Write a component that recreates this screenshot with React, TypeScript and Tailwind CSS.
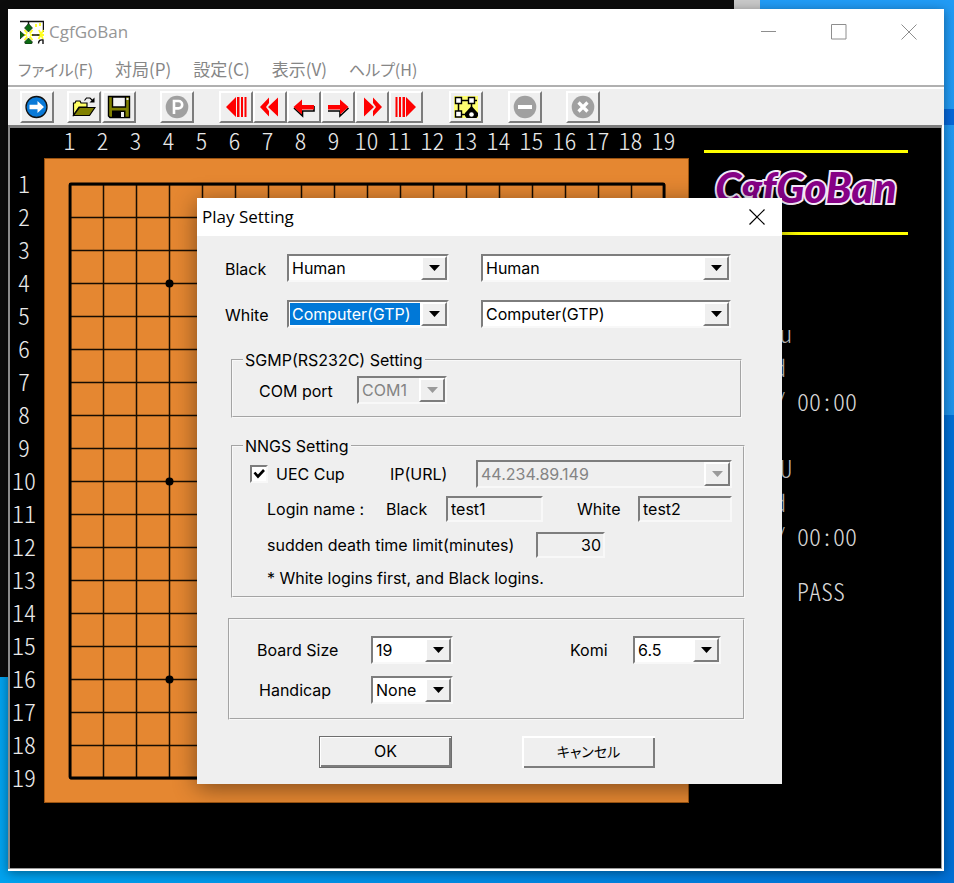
import React from "react";

const uiFont = "font-['Inter','Noto_Sans_CJK_JP',sans-serif]";
const boardFont = "font-['Noto_Sans_CJK_JP',sans-serif] font-light [font-feature-settings:'hwid']";

const lines = Array.from({ length: 19 }, (_, i) => i + 1);
const stars = [4, 10, 16];

function ToolButton({ label, children }: { label: string; children: React.ReactNode }) {
  return (
    <button
      type="button"
      aria-label={label}
      className="flex h-8 w-[34px] items-center justify-center border-2 border-t-white border-r-[#7c7c7c] border-b-[#7c7c7c] border-l-white bg-[#efefef]"
    >
      {children}
    </button>
  );
}

function Icon({ children }: { children: React.ReactNode }) {
  return (
    <svg width="24" height="24" viewBox="0 0 24 24" aria-hidden="true">
      {children}
    </svg>
  );
}

function Toolbar() {
  return (
    <div className="flex h-[38px] items-center border-t-2 border-white bg-[#efefef] pb-px pl-3">
      <ToolButton label="Start">
        <Icon>
          <circle cx="11.500" cy="12" r="10.500" fill="#0a7ad8" stroke="#111" strokeWidth="1.3" />
          <path d="M4.500 9.800h8V6l6.500 6-6.500 6v-3.800h-8z" fill="#fff" />
        </Icon>
      </ToolButton>
      <div className="ml-[13px] flex gap-px">
        <ToolButton label="Open">
          <Icon>
            <path d="M1.500 20V8h1.500l1-2h4l1 2h6v4H7z" fill="#ffff66" stroke="#000" strokeWidth="1.2" />
            <path d="M1.500 20.500 7.500 12.500H23l-5.500 8z" fill="#808000" stroke="#000" strokeWidth="1.2" />
            <path d="M12.500 5.500 14.500 3h3.500l3 3" fill="none" stroke="#000" strokeWidth="1.2" />
            <path d="M22.500 2.500V7.500H17.500z" fill="#000" />
          </Icon>
        </ToolButton>
        <ToolButton label="Save">
          <Icon>
            <path d="M1.500 1.500H22.500V22.500H3L1.500 21z" fill="#808000" stroke="#000" strokeWidth="1.4" />
            <path d="M5.500 2H18.500V12H5.500z" fill="#f4f4f4" stroke="#000" strokeWidth="1.4" />
            <path d="M5 15.500H18.500V22.500H5z" fill="#000" />
            <path d="M14 17h3v5h-3z" fill="#eee" />
            <path d="M19.500 3h2v2h-2z" fill="#eee" />
          </Icon>
        </ToolButton>
      </div>
      <div className="ml-6">
        <ToolButton label="Pass">
          <Icon>
            <circle cx="12" cy="12" r="11.300" fill="#a0a0a0" />
            <path d="M9 19V6h4.500a3.700 3.700 0 0 1 0 7.400H9" fill="none" stroke="#fff" strokeWidth="2.600" />
          </Icon>
        </ToolButton>
      </div>
      <div className="ml-[25px] flex">
        <ToolButton label="First move">
          <Icon>
            <path d="M2 12 12 2V22zM13 2h2.500v20H13zM17 2h2v20h-2zM20.500 2h2v20h-2z" fill="#f00" />
          </Icon>
        </ToolButton>
        <ToolButton label="Back ten moves">
          <Icon>
            <path d="M2 12 11 2.500V8L8 12l3 4v5.500zM10 12l10-9.500v19z" fill="#f00" />
          </Icon>
        </ToolButton>
        <ToolButton label="Back one move">
          <Icon>
            <path d="M2 13 10.500 21V16H22V11" fill="none" stroke="#000" strokeWidth="1.600" />
            <path d="M1.500 12 10 4.500V10H22v4.500H10V19.500z" fill="#f00" />
          </Icon>
        </ToolButton>
        <ToolButton label="Forward one move">
          <Icon>
            <path d="M22.500 13 14 21V16H2" fill="none" stroke="#000" strokeWidth="1.600" />
            <path d="M22.500 12 14 4.500V10H2v4.500h12V19.500z" fill="#f00" />
          </Icon>
        </ToolButton>
        <ToolButton label="Forward ten moves">
          <Icon>
            <path d="M22 12 13 2.500V8l3 4-3 4v5.500zM14 12 4 2.500v19z" fill="#f00" />
          </Icon>
        </ToolButton>
        <ToolButton label="Last move">
          <Icon>
            <path d="M22 12 12 2V22zM8.500 2H11v20H8.500zM5 2h2v20H5zM1.500 2h2v20h-2z" fill="#f00" />
          </Icon>
        </ToolButton>
      </div>
      <div className="ml-[26px]">
        <ToolButton label="Show territory">
          <Icon>
            <path d="M0 1H24V23H0z" fill="#ffff70" />
            <path d="M4.500 5.500H23M4.500 5.500v14H18M17.500 5.500v14" fill="none" stroke="#000" strokeWidth="1.500" />
            <path d="M17.500 11 24 18v3l-1.500 2h-10L11 21v-3z" fill="#000" />
            <path d="M1.500 2.500h6v6h-6zM14.500 2.500h6v6h-6zM1.500 16h6v6h-6z" fill="#fff" stroke="#000" strokeWidth="1.400" />
            <circle cx="17.500" cy="19.500" r="2.300" fill="#fff" />
          </Icon>
        </ToolButton>
      </div>
      <div className="ml-[25px]">
        <ToolButton label="Stop">
          <Icon>
            <circle cx="12" cy="12" r="11.300" fill="#a0a0a0" />
            <path d="M5 10h14v4H5z" fill="#fff" />
          </Icon>
        </ToolButton>
      </div>
      <div className="ml-6">
        <ToolButton label="Cancel search">
          <Icon>
            <circle cx="12" cy="12" r="11.300" fill="#a0a0a0" />
            <path d="m7.500 7.500 9 9m0-9-9 9" stroke="#fff" strokeWidth="3.200" />
          </Icon>
        </ToolButton>
      </div>
    </div>
  );
}

function TitleBar() {
  return (
    <header className="flex h-[45px] items-center justify-between pr-[27px] pl-3">
      <div className="flex items-center gap-[5px]">
        <svg width="24" height="24" viewBox="0 0 24 24" aria-hidden="true">
          <path d="M0 1.500H23.500V12M8.500 2v4" fill="none" stroke="#111" strokeWidth="1.500" />
          <path d="m4.500 10 8 10m0-10-8 10M3.500 15h10M19 10l4 9m.500-9-5 9M17 15h7M16 4v3m4-4v3" stroke="#ffff20" strokeWidth="1.800" />
          <path d="M8.500 3.500 12.500 8l-4 4-4-4zM0 11l4.500 4L0 19zM8.500 18l4 4-1 2h-6l-1-2z" fill="#0a6b12" stroke="#111" strokeWidth=".6" />
          <circle cx="8.500" cy="15" r="2" fill="#fff" />
          <path d="M12 15h7.500M18.500 23.500c0-3 2-4 4.500-3.500v4" fill="none" stroke="#111" strokeWidth="1.400" />
        </svg>
        <h1 className="font-['Open_Sans',sans-serif] text-[17px] leading-6 text-[#969696]">CgfGoBan</h1>
      </div>
      <div className="flex items-center gap-[54px] text-[#8e8e8e]">
        <button type="button" aria-label="Minimize">
          <svg width="16" height="16" viewBox="0 0 16 16"><path d="M0 7.500h15" stroke="currentColor" /></svg>
        </button>
        <button type="button" aria-label="Maximize">
          <svg width="16" height="16" viewBox="0 0 16 16"><path d="M.5.5h14.500v14.500H.5z" fill="none" stroke="currentColor" /></svg>
        </button>
        <button type="button" aria-label="Close">
          <svg width="16" height="16" viewBox="0 0 16 16"><path d="m.5.5 15 15m0-15-15 15" stroke="currentColor" /></svg>
        </button>
      </div>
    </header>
  );
}

function MenuBar() {
  return (
    <nav className="flex h-[31px] items-center gap-[22px] pb-0.5 pl-2.5 font-['Noto_Sans_CJK_JP',sans-serif] text-[17px] leading-6 text-[#868686] [font-feature-settings:'palt']">
      <button type="button" className="text-[16px]">ファイル(F)</button>
      <button type="button">対局(P)</button>
      <button type="button">設定(C)</button>
      <button type="button">表示(V)</button>
      <button type="button" className="text-[16px]">ヘルプ(H)</button>
    </nav>
  );
}

function Board() {
  return (
    <div className={`text-[24px] leading-[33px] text-[#e8e8e8] ${boardFont}`}>
      <div className="flex h-[30px] items-center pb-2 pl-[43px]">
        {lines.map((n) => (
          <span key={n} className="w-[33px] text-center">{n}</span>
        ))}
      </div>
      <div className="flex">
        <div className="flex w-[34px] flex-col pt-2">
          {lines.map((n) => (
            <span key={n} className={n < 10 ? "h-[33px] pl-2" : "h-[33px] pl-0.5"}>{n}</span>
          ))}
        </div>
        <svg width="645" height="645" viewBox="0 0 645 645" role="img" aria-label="Go board">
          <rect x=".5" y=".5" width="644" height="644" fill="#e58731" stroke="#9a5310" />
          {lines.map((n) => (
            <g key={n} stroke="#170c02" strokeWidth="1.500">
              <path d={`M${26.500 + 33 * (n - 1)} 26V620`} />
              <path d={`M26 ${26.500 + 33 * (n - 1)}H620`} />
            </g>
          ))}
          <rect x="26" y="26" width="594" height="594" fill="none" stroke="#000" strokeWidth="2.800" rx="1" />
          {stars.map((r) =>
            stars.map((c) => (
              <circle key={`${r}-${c}`} cx={26.500 + 33 * (c - 1)} cy={26.500 + 33 * (r - 1)} r="4" />
            ))
          )}
        </svg>
      </div>
    </div>
  );
}

function PlayerInfo({ name }: { name: string }) {
  return (
    <div className="h-[135px]">
      <p className="w-[88px] text-right">{name}</p>
      <p className="w-[82px] text-right">d</p>
      <p className="flex">
        <span className="w-[82px] text-right">/</span>
        <span className="pl-[11px]">00:00</span>
      </p>
    </div>
  );
}

function SidePanel() {
  return (
    <aside className={`ml-[15px] w-[204px] pt-[22px] text-[24px] leading-[34px] text-[#d8d8d8] ${boardFont}`}>
      <div className="flex h-[85px] items-center justify-center border-y-3 border-[#ff0] pb-3">
        <span className="font-['Lato',sans-serif] text-[42px] leading-[48px] font-black text-[#860086] italic [-webkit-text-stroke:4px_#f4e8f8] [paint-order:stroke_fill]">
          CgfGoBan
        </span>
      </div>
      <div className="pt-[81px]">
        <PlayerInfo name="u" />
        <PlayerInfo name="U" />
        <p className="-mt-3 pl-[93px]">PASS</p>
      </div>
    </aside>
  );
}

const sunken = "border-2 border-t-[#7d7d7d] border-r-[#f8f8f8] border-b-[#f8f8f8] border-l-[#7d7d7d]";

type ComboProps = {
  id: string;
  label?: string;
  value: string;
  width: string;
  disabled?: boolean;
  selected?: boolean;
};

function Combo({ id, label, value, width, disabled, selected }: ComboProps) {
  return (
    <div className={`flex h-7 ${sunken} ${width} ${disabled ? "bg-[#efefef]" : "bg-white"}`}>
      <select
        id={id}
        aria-label={label}
        defaultValue={value}
        disabled={disabled}
        className={`m-px min-w-0 flex-1 appearance-none truncate pl-0.5 leading-[22px] opacity-100 outline-none ${
          selected ? "bg-[#0078d7] text-white" : disabled ? "bg-[#efefef] text-[#848484]" : "bg-white text-black"
        }`}
      >
        <option>{value}</option>
      </select>
      <span className="pointer-events-none flex w-[26px] items-center justify-center border-2 border-t-white border-r-[#7d7d7d] border-b-[#7d7d7d] border-l-white bg-[#efefef]">
        <svg width="11" height="6" viewBox="0 0 11 6" aria-hidden="true">
          <path d="M0 0h11L5.500 6z" fill={disabled ? "#9a9a9a" : "#000"} />
        </svg>
      </span>
    </div>
  );
}

const groupBox = "border-2 border-[#f8f8f8] [border-style:groove]";

function PlaySetting() {
  return (
    <section
      role="dialog"
      aria-labelledby="dialog-title"
      className={`absolute top-[198px] left-[197px] w-[585px] bg-[#efefef] pb-4 text-[16px] leading-5 text-black shadow-[0_4px_22px_rgba(0,0,0,0.45)] ${uiFont}`}
    >
      <header className="flex h-[38px] items-center justify-between bg-white pr-[17px] pl-[5px]">
        <h2 id="dialog-title" className="font-['Open_Sans',sans-serif] text-[17px] leading-6">Play Setting</h2>
        <button type="button" aria-label="Close dialog">
          <svg width="16" height="16" viewBox="0 0 16 16"><path d="m.5.5 15 15m0-15-15 15" stroke="#000" strokeWidth="1.200" /></svg>
        </button>
      </header>

      <form onSubmit={(e) => e.preventDefault()}>
        <div className="flex flex-col gap-[18px] pt-[18px] pl-7">
          <div className="flex items-center">
            <label htmlFor="black" className="w-[62px] pt-0.5">Black</label>
            <Combo id="black" value="Human" width="w-[162px]" />
            <div className="pl-8"><Combo id="black-engine" label="Black engine" value="Human" width="w-[250px]" /></div>
          </div>
          <div className="flex items-center">
            <label htmlFor="white" className="w-[62px] pt-0.5">White</label>
            <Combo id="white" value="Computer(GTP)" width="w-[162px]" selected />
            <div className="pl-8"><Combo id="white-engine" label="White engine" value="Computer(GTP)" width="w-[250px]" /></div>
          </div>
        </div>

        <fieldset className={`mt-[22px] mr-[40px] ml-[34px] h-[68px] pl-2.5 ${groupBox}`}>
          <legend className="px-0.5">SGMP(RS232C) Setting</legend>
          <div className="flex items-center pt-1.5 pl-4">
            <label htmlFor="com" className="w-[98px] pt-0.5">COM port</label>
            <Combo id="com" value="COM1" width="w-[90px]" disabled />
          </div>
        </fieldset>

        <fieldset className={`mt-[18px] mr-[37px] ml-[34px] h-[162px] pl-2.5 ${groupBox}`}>
          <legend className="px-0.5">NNGS Setting</legend>
          <div className="flex items-center pt-1 pl-[7px]">
            <input id="uec" type="checkbox" defaultChecked className={`peer size-[18px] appearance-none bg-white ${sunken}`} />
            <svg width="18" height="18" viewBox="0 0 18 18" aria-hidden="true" className="pointer-events-none -ml-[18px]">
              <path d="m4.500 7.500 3.500 4 6-6.500" fill="none" stroke="#000" strokeWidth="2.600" />
            </svg>
            <label htmlFor="uec" className="w-[122px] pl-2">UEC Cup</label>
            <label htmlFor="ip" className="w-[86px]">IP(URL)</label>
            <Combo id="ip" value="44.234.89.149" width="w-[256px]" disabled />
          </div>
          <div className="flex items-center pt-2 pl-6">
            <span className="w-[119px]">Login name :</span>
            <label htmlFor="login-black" className="w-[60px]">Black</label>
            <input id="login-black" defaultValue="test1" className={`h-[26px] w-[97px] bg-[#efefef] pl-[3px] ${sunken}`} />
            <label htmlFor="login-white" className="w-[95px] pl-[34px]">White</label>
            <input id="login-white" defaultValue="test2" className={`h-[26px] w-[94px] bg-[#efefef] pl-[3px] ${sunken}`} />
          </div>
          <div className="flex items-center pt-2.5 pl-6">
            <label htmlFor="limit" className="w-[269px]">sudden death time limit(minutes)</label>
            <input id="limit" defaultValue="30" className={`h-[26px] w-[69px] bg-[#efefef] pr-0.5 text-right ${sunken}`} />
          </div>
          <p className="pt-2.5 pl-6">* White logins first, and Black logins.</p>
        </fieldset>

        <div className={`mt-5 mr-[37px] ml-[31px] flex h-[102px] flex-col gap-3 pt-4 pl-[27px] ${groupBox}`}>
          <div className="flex items-center">
            <label htmlFor="size" className="w-[114px]">Board Size</label>
            <Combo id="size" value="19" width="w-[82px]" />
            <label htmlFor="komi" className="w-[180px] pl-[117px]">Komi</label>
            <Combo id="komi" value="6.5" width="w-[88px]" />
          </div>
          <div className="flex items-center">
            <label htmlFor="handicap" className="w-[114px] pl-0.5">Handicap</label>
            <Combo id="handicap" value="None" width="w-[82px]" />
          </div>
        </div>

        <div className="flex gap-[70px] pt-4 pl-[122px]">
          <button type="submit" className="h-8 w-[133px] border border-[#6e6e6e] pb-0.5 shadow-[inset_1px_1px_0_#fff,inset_-2px_-2px_0_#7d7d7d]">
            OK
          </button>
          <button type="button" className="h-8 w-[133px] pb-0.5 font-['Noto_Sans_CJK_JP',sans-serif] text-[14px] shadow-[inset_2px_2px_0_#fff,inset_-2px_-2px_0_#7d7d7d] [font-feature-settings:'palt']">
            キャンセル
          </button>
        </div>
      </form>
    </section>
  );
}

export default function App() {
  return (
    <div className="relative flex min-h-screen flex-col overflow-hidden bg-linear-to-r from-[#00a2ee] to-[#006fd4] pt-[9px] pr-2.5 pb-3 pl-2">
      <div className="absolute top-0 right-0 h-[415px] w-[240px] bg-linear-to-b from-[#219bf5] to-[#1f93ea]" />
      <div className="absolute top-[109px] right-0 h-4 w-3 bg-[#0567d8]" />
      <div className="absolute top-0 left-0 h-[677px] w-[734px] bg-[#0c0c0c]" />
      <div className="absolute top-0 left-[734px] h-5 w-[26px] bg-[#c8c8c8]" />

      <main className="relative flex flex-1 flex-col bg-white shadow-[0_2px_10px_rgba(0,0,0,0.4)]">
        <TitleBar />
        <MenuBar />
        <div className="h-0.5 bg-[#b0b0b0]" />
        <Toolbar />
        <div className="mr-0.5 mb-0.5 flex flex-1 border-t-3 border-r border-b border-l-2 border-t-[#7d7d7d] border-r-[#9a9a9a] border-b-[#9a9a9a] border-l-[#8a8a8a] bg-black">
          <Board />
          <SidePanel />
        </div>
      </main>

      <PlaySetting />
    </div>
  );
}
